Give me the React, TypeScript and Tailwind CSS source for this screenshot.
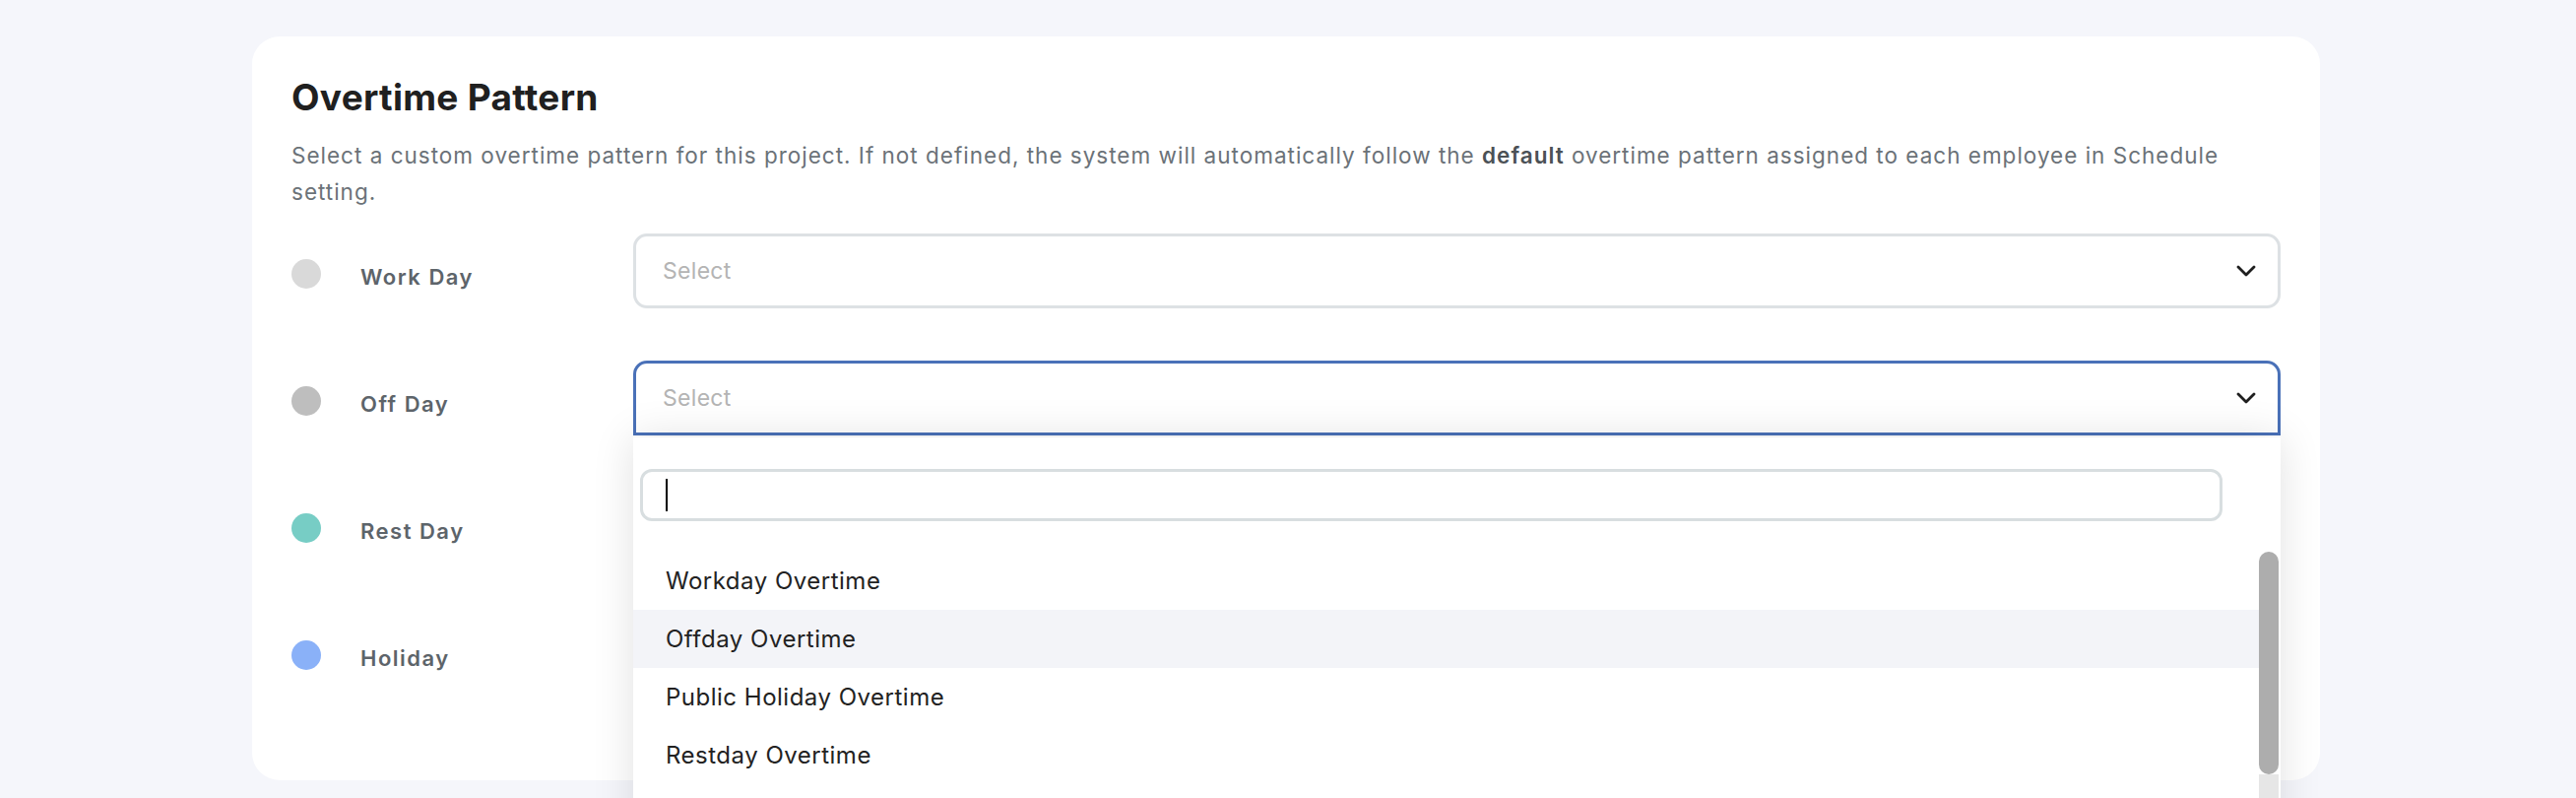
import React from "react";

const Chevron = () => (
  <svg width="20" height="12" viewBox="0 0 20 12" fill="none">
    <path d="M2 2 L10 10 L18 2" stroke="#1f1f1f" strokeWidth="2.8" strokeLinecap="round" strokeLinejoin="round" />
  </svg>
);

const rows = [
  { label: "Work Day", color: "#d9d9d9", open: false },
  { label: "Off Day", color: "#bebebe", open: true },
  { label: "Rest Day", color: "#77cdc5", open: false },
  { label: "Holiday", color: "#8ab1f8", open: false },
];

const options = ["Workday Overtime", "Offday Overtime", "Public Holiday Overtime", "Restday Overtime"];

function Menu() {
  return (
    <div className="absolute left-0 right-0 top-full mt-[2px] z-10 h-[420px] bg-white shadow-[0_0_40px_rgba(0,0,0,0.12)]">
      <div className="pt-[32px] pl-[7px]">
        <div className="w-[1607px] h-[53px] rounded-[12px] border-[3px] border-[#d8dee0] flex items-center pl-[23px]">
          <span className="w-[2px] h-[33px] bg-black" />
        </div>
      </div>
      <div className="mt-[31px] flex pr-[2px]">
        <div className="flex-1 flex flex-col">
          {options.map((o, i) => (
            <div
              key={o}
              className={
                i === 1
                  ? "h-[59px] flex items-center pl-[33px] text-[24px] tracking-[0.5px] text-[#222222] bg-[#f3f4f8]"
                  : "h-[59px] flex items-center pl-[33px] text-[24px] tracking-[0.5px] text-[#222222]"
              }
            >
              {o}
            </div>
          ))}
          <div className="h-[59px]" />
        </div>
        <div className="w-[20px] flex flex-col">
          <div className="h-[226px] rounded-full bg-[#adadad]" />
          <div className="flex-1 bg-[#e6e6e6]" />
        </div>
      </div>
    </div>
  );
}

export default function App() {
  return (
    <div className="h-[810px] w-[2616px] overflow-hidden bg-[#f5f6fb] pt-[37px] font-['Inter',sans-serif]">
      <div className="ml-[256px] w-[2100px] h-[755px] rounded-[28px] bg-white px-[40px] pt-[40px]">
        <div className="text-[37px] leading-[44px] font-bold tracking-[0.3px] text-[#202020]">Overtime Pattern</div>
        <p className="mt-[18px] text-[22.5px] leading-[37px] tracking-[1px] text-[#6b7278]">
          <span>
            Select a custom overtime pattern for this project. If not defined, the system will automatically follow the{" "}
            <b className="font-semibold text-[#4b5156]">default</b> overtime pattern assigned to each employee in Schedule
          </span>
          <br />
          <span>setting.</span>
        </p>
        <div className="mt-[24px] flex flex-col gap-[53px]">
          {rows.map((r) => (
            <div key={r.label} className="flex">
              <div className="w-[347px] h-[76px] flex items-center pt-[6px]">
                <div className="w-[30px] h-[30px] rounded-full" style={{ backgroundColor: r.color }} />
                <div className="ml-[40px] mt-[6px] text-[22px] font-semibold tracking-[1.5px] text-[#5d646a]">
                  {r.label}
                </div>
              </div>
              <div className="relative flex-1">
                <div
                  className={
                    r.open
                      ? "h-[76px] rounded-t-[14px] border-[3px] border-[#4a71b8] flex items-center pl-[27px] pr-[22px]"
                      : "h-[76px] rounded-[14px] border-[3px] border-[#dde1e4] flex items-center pl-[27px] pr-[22px]"
                  }
                >
                  <span className="flex-1 text-[23px] tracking-[0.3px] text-[#b4b4b4]">Select</span>
                  <Chevron />
                </div>
                {r.open && <Menu />}
              </div>
            </div>
          ))}
        </div>
      </div>
    </div>
  );
}
